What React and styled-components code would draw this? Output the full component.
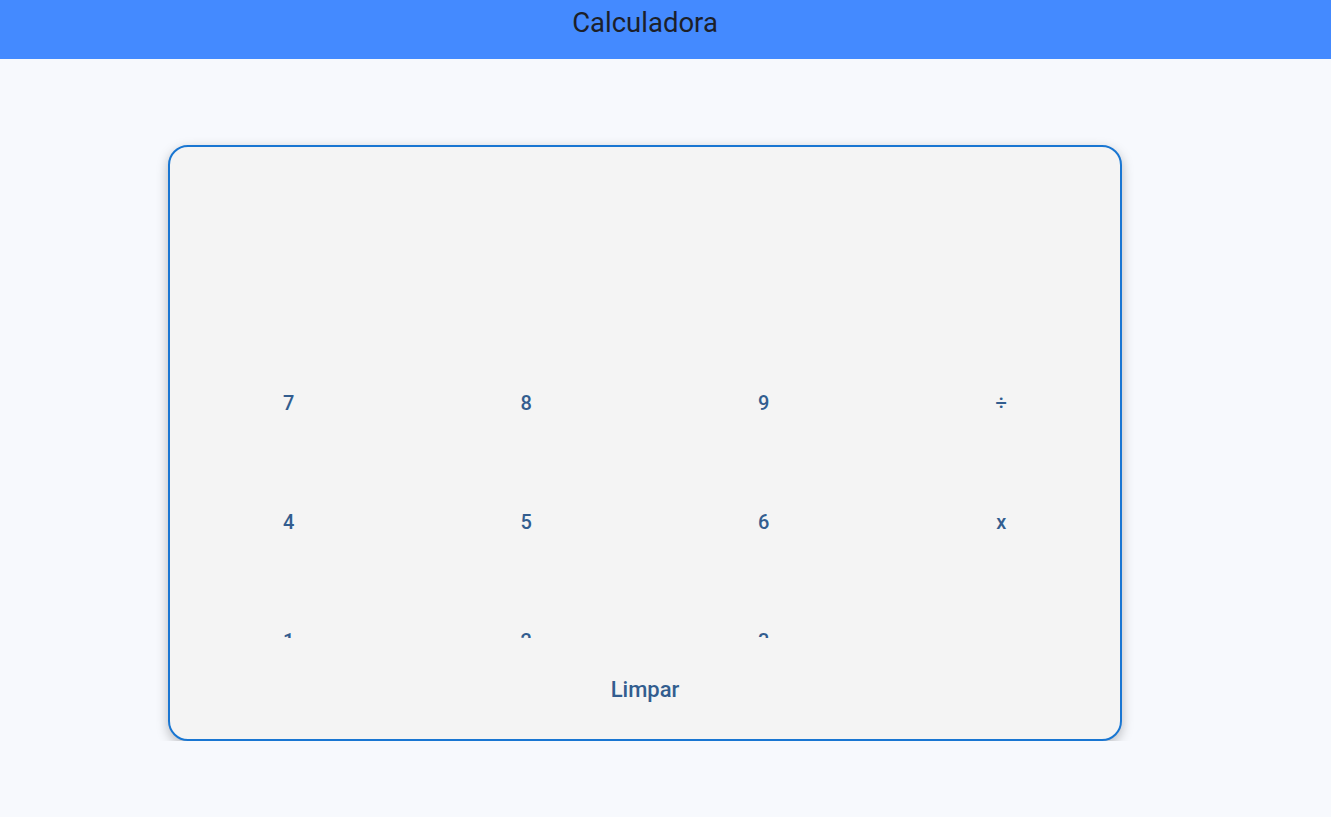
import React from "react";
import styled, { createGlobalStyle } from "styled-components";

const Global = createGlobalStyle`
  html, body { margin: 0; padding: 0; background: #f7f9fd; overflow: hidden; }
  body { font-family: Roboto, "Noto Sans", sans-serif; }
`;

const Page = styled.div`
  width: 1290px;
  display: flex;
  flex-direction: column;
`;

const Header = styled.header`
  height: 59px;
  width: 1331px;
  background: #448aff;
  display: flex;
  justify-content: flex-start;
  padding-top: 6px;
  box-sizing: border-box;
`;

const HeaderInner = styled.div`
  width: 1290px;
  display: flex;
  justify-content: center;
`;

const Title = styled.h1`
  margin: 0;
  font-size: 27.5px;
  font-weight: 400;
  color: #1c1f2a;
  line-height: 34px;
`;

const Main = styled.main`
  display: flex;
  justify-content: center;
  padding-top: 86px;
`;

const Card = styled.div`
  width: 954px;
  height: 596px;
  box-sizing: border-box;
  border: 2px solid #1976d2;
  border-radius: 20px;
  background: #f4f4f4;
  box-shadow: 0 4px 12px rgba(0, 0, 0, 0.26);
  display: flex;
  flex-direction: column;
  overflow: hidden;
`;

const Display = styled.div`
  height: 196px;
  flex-shrink: 0;
`;

const Keys = styled.div`
  height: 295px;
  overflow: hidden;
  display: grid;
  grid-template-columns: repeat(4, 1fr);
  grid-auto-rows: 119px;
  flex-shrink: 0;
`;

const Key = styled.button`
  border: none;
  background: transparent;
  font-family: Roboto, sans-serif;
  font-size: ${(p) => (p.$large ? "22px" : "20px")};
  font-weight: 500;
  color: #325d8f;
  display: flex;
  align-items: center;
  justify-content: center;
  padding: 0;
  cursor: pointer;
`;

const ClearRow = styled.div`
  flex: 1;
  display: flex;
  align-items: center;
  justify-content: center;
  padding-top: 2px;
`;

const ClearButton = styled(Key)`
  height: 50px;
  padding: 0 16px;
`;

const keys = ["7", "8", "9", "÷", "4", "5", "6", "x", "1", "2", "3", "-", "0", ".", "=", "+"];

export default function App() {
  return (
    <>
      <Global />
      <Header>
        <HeaderInner>
          <Title>Calculadora</Title>
        </HeaderInner>
      </Header>
      <Page>
        <Main>
          <Card>
            <Display />
            <Keys>
              {keys.map((k) => (
                <Key key={k}>{k}</Key>
              ))}
            </Keys>
            <ClearRow>
              <ClearButton $large>Limpar</ClearButton>
            </ClearRow>
          </Card>
        </Main>
      </Page>
    </>
  );
}
